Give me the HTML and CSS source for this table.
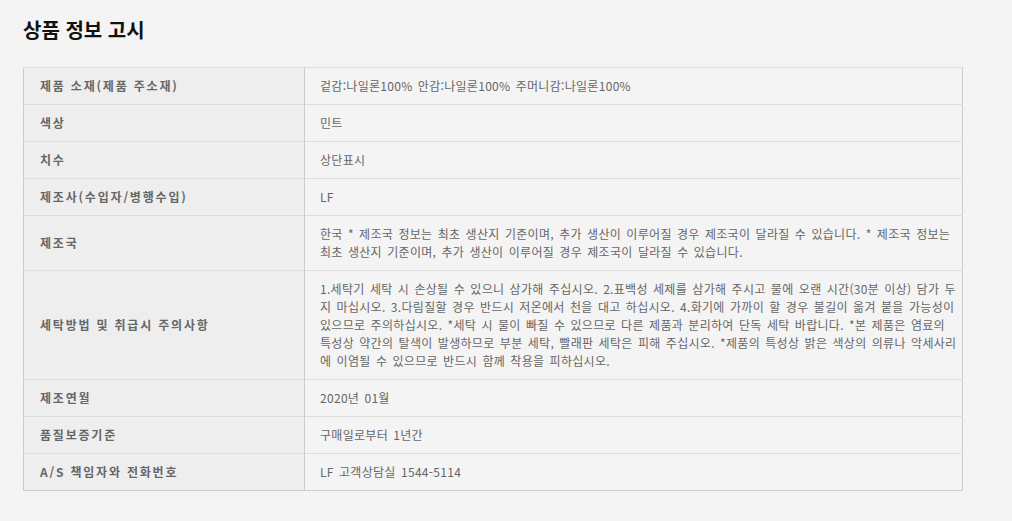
FILE: index.html
```html
<!DOCTYPE html>
<html lang="ko">
<head>
<meta charset="utf-8">
<title>상품 정보 고시</title>
<link rel="stylesheet" href="styles.css">
</head>
<body>
<div class="page">
  <h2 class="title">상품 정보 고시</h2>
  <table class="notice">
    <tbody>
      <tr><th>제품 소재(제품 주소재)</th><td>겉감:나일론100% 안감:나일론100% 주머니감:나일론100%</td></tr>
      <tr><th>색상</th><td>민트</td></tr>
      <tr><th>치수</th><td>상단표시</td></tr>
      <tr><th>제조사(수입자/병행수입)</th><td>LF</td></tr>
      <tr><th>제조국</th><td>한국 * 제조국 정보는 최초 생산지 기준이며, 추가 생산이 이루어질 경우 제조국이 달라질 수 있습니다. * 제조국 정보는 최초 생산지 기준이며, 추가 생산이 이루어질 경우 제조국이 달라질 수 있습니다.</td></tr>
      <tr><th>세탁방법 및 취급시 주의사항</th><td>1.세탁기 세탁 시 손상될 수 있으니 삼가해 주십시오. 2.표백성 세제를 삼가해 주시고 물에 오랜 시간(30분 이상) 담가 두지 마십시오. 3.다림질할 경우 반드시 저온에서 천을 대고 하십시오. 4.화기에 가까이 할 경우 불길이 옮겨 붙을 가능성이 있으므로 주의하십시오. *세탁 시 물이 빠질 수 있으므로 다른 제품과 분리하여 단독 세탁 바랍니다. *본 제품은 염료의 특성상 약간의 탈색이 발생하므로 부분 세탁, 빨래판 세탁은 피해 주십시오. *제품의 특성상 밝은 색상의 의류나 악세사리에 이염될 수 있으므로 반드시 함께 착용을 피하십시오.</td></tr>
      <tr><th>제조연월</th><td>2020년 01월</td></tr>
      <tr><th>품질보증기준</th><td>구매일로부터 1년간</td></tr>
      <tr><th>A/S 책임자와 전화번호</th><td>LF 고객상담실 1544-5114</td></tr>
    </tbody>
  </table>
</div>
</body>
</html>
```

FILE: styles.css
```css
html, body {
  margin: 0;
  padding: 0;
  background: #f4f4f4;
}

body {
  font-family: "Noto Sans CJK KR", "Noto Sans", sans-serif;
  color: #666;
}

.page {
  padding: 17px 0 0 23px;
  width: 940px;
}

.title {
  margin: 0 0 24px 0;
  font-size: 20px;
  line-height: 26px;
  font-weight: 700;
  color: #111;
  letter-spacing: 0;
}

.notice {
  width: 940px;
  border-collapse: collapse;
  table-layout: fixed;
  border: 1px solid #cccccc;
}

.notice th,
.notice td {
  border-top: 1px solid #dddddd;
  font-size: 12px;
  line-height: 18px;
  vertical-align: middle;
  text-align: left;
}

.notice th {
  width: 264px;
  padding: 9px 0 9px 16px;
  background: #eeeeee;
  font-weight: 700;
  color: #666;
  letter-spacing: 1.8px;
  border-right: 1px solid #cccccc;
}

.notice td {
  padding: 9px 1px 9px 15px;
  background: #f4f4f4;
  font-weight: 400;
  color: #666;
  letter-spacing: 0.3px;
  word-spacing: 1.6px;
  word-break: break-all;
}
```
